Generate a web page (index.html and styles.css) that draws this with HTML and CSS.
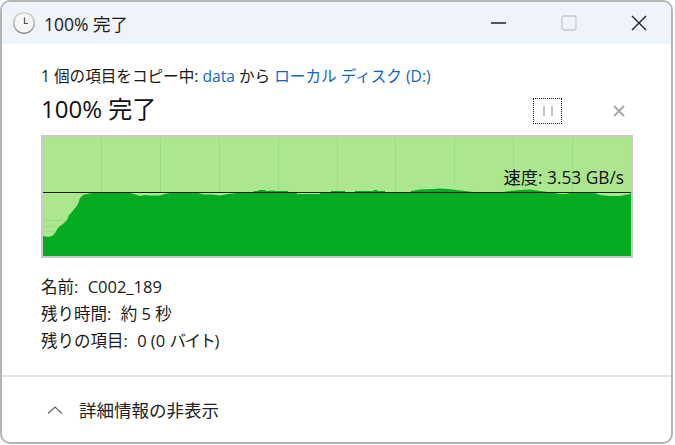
FILE: index.html
```html
<!DOCTYPE html>
<html lang="ja">
<head>
	<meta charset="UTF-8">
	<title>100% 完了</title>
	<link rel="stylesheet" href="styles.css">
</head>
<body>
	<div class="window">
		<div class="titlebar">
			<svg class="clock" width="24" height="24" viewBox="0 0 24 24">
				<defs>
					<linearGradient id="rim" x1="0" y1="0" x2="0" y2="1">
						<stop offset="0" stop-color="#d8d8d8"/>
						<stop offset="1" stop-color="#8e8e8e"/>
					</linearGradient>
				</defs>
				<circle cx="12" cy="12" r="11" fill="url(#rim)"/>
				<circle cx="12" cy="12" r="9.6" fill="#f6f6f6"/>
				<path d="M12.5 6.5V12.5H16" fill="none" stroke="#555" stroke-width="1.2"/>
			</svg>
			<span class="title">100% 完了</span>
			<div class="winbtns">
				<svg width="16" height="16" viewBox="0 0 16 16"><path d="M0 8H15" stroke="#222" stroke-width="1.3"/></svg>
				<svg width="16" height="16" viewBox="0 0 16 16"><rect x="1" y="1" width="14" height="14" rx="2" fill="none" stroke="#c6c8cc" stroke-width="1.3"/></svg>
				<svg width="16" height="16" viewBox="0 0 16 16"><path d="M1 1L15 15M15 1L1 15" stroke="#222" stroke-width="1.4"/></svg>
			</div>
		</div>

		<div class="content">
			<div class="status">1 個の項目をコピー中: <a href="#">data</a> から <a href="#">ローカル ディスク (D:)</a></div>
			<div class="headrow">
				<div class="percent">100% 完了</div>
				<div class="pause">
					<svg width="12" height="12" viewBox="0 0 12 12"><path d="M2 1V11M10 1V11" stroke="#c4c4c4" stroke-width="2"/></svg>
				</div>
				<svg class="cancel" width="14" height="14" viewBox="0 0 14 14"><path d="M2 2L12 12M12 2L2 12" stroke="#a9a9a9" stroke-width="2"/></svg>
			</div>

			<div class="chart">
				<svg width="588" height="119" viewBox="43 137 588 119">
					<rect x="43" y="137" width="588" height="119" fill="#ace78f"/>
					<path d="M101.500 137V192M160.500 137V192M219.500 137V192M278.500 137V192M337.500 137V192M395.500 137V192M454.500 137V192M513.500 137V192M572.500 137V192" stroke="#98de82" stroke-width="1"/>
					<path d="M43 220.500H66M43 226.500H60M43 231.500H54" stroke="#98de82" stroke-width="1"/>
					<path class="speed" d="M43 236L48 237L52 236L55 233L58 228L60 226L63 224L67 220L69 215L72 212L75 208L76 207L78 204L80 198L83 195L87 194L92 193L130 193L134 194L140 196L145 195L150 195.500L160 195.500L165 194L170 193L198 193L204 194.500L212 194.500L220 195.500L228 194L237 193L253 193L254 191L258 191L259 190L265 190L266 191L274 190.500L275 191L288 191L289 193L297 193L297 194L320 194L320 193L331 193L331 191L345 191L345 192L355 192L355 191L373 191L374 190L377 190L378 191L385 191L385 193L411 193L411 191L420 189.500L434 189L440 188.500L448 189L456 190L465 191L473 192L503 192L510 191L520 190L530 189.500L540 191L548 192L555 193L560 194L566 194L570 193L595 193L600 195L610 196L620 196L630 194L631 193V256H43Z" fill="#05ac21"/>
					<path d="M43 192.500H631" stroke="#1e1e1e" stroke-width="1"/>
				</svg>
				<span class="speedlabel">速度: 3.53 GB/s</span>
			</div>

			<div class="details">
				<div>名前: <span class="val">C002_189</span></div>
				<div>残り時間: <span class="val">約 5 秒</span></div>
				<div>残りの項目: <span class="val">0 (0 <span class="kana">バイト</span>)</span></div>
			</div>
		</div>

		<div class="footer">
			<svg width="16" height="10" viewBox="0 0 16 10"><path d="M1 8.500L8 2L15 8.500" fill="none" stroke="#666" stroke-width="1.2"/></svg>
			<span>詳細情報の非表示</span>
		</div>
	</div>
</body>
</html>
```

FILE: styles.css
```css
*{margin:0;padding:0;box-sizing:border-box;}
html,body{height:100%;background:#fff;}
body{font-family:"Open Sans","Noto Sans CJK JP",sans-serif;color:#1a1a1a;font-size:16px;padding:0 2px 1px 0;}
a{color:#0f67c9;text-decoration:none;}
.window{height:100%;display:flex;flex-direction:column;background:#fff;border:2px solid #b4b4b4;border-radius:10px;overflow:hidden;}
.titlebar{height:42px;display:flex;align-items:center;background:#eff3fa;padding-left:10px;flex:none;}
.clock{flex:none;}
.title{margin-left:8px;font-size:17.500px;}
.winbtns{margin-left:auto;display:flex;align-items:center;gap:54px;padding-right:24px;}
.content{flex:1;padding:21px 39px 0;}
.status{font-size:15.600px;line-height:22px;}
.headrow{display:flex;align-items:center;height:36px;margin-top:4px;}
.percent{font-size:24px;line-height:36px;color:#111;}
.pause{margin-left:auto;width:29px;height:26px;border:1px dotted #222;display:flex;align-items:center;justify-content:center;margin-top:4px;}
.cancel{margin-left:50px;margin-right:6px;margin-top:4px;}
.chart{position:relative;width:592px;height:123px;margin-top:8px;border:2px solid #c9c9c9;}
.chart svg{display:block;}
.speedlabel{position:absolute;right:7px;top:30px;font-size:17.300px;line-height:22px;color:#111;}
.details{margin-top:15px;font-size:16.500px;line-height:27px;}
.val{margin-left:5px;}
.kana{letter-spacing:-1.500px;}
.footer{height:67px;flex:none;border-top:2px solid #e3e3e3;display:flex;align-items:center;padding-left:45px;gap:16px;font-size:17.500px;color:#222;}
```
